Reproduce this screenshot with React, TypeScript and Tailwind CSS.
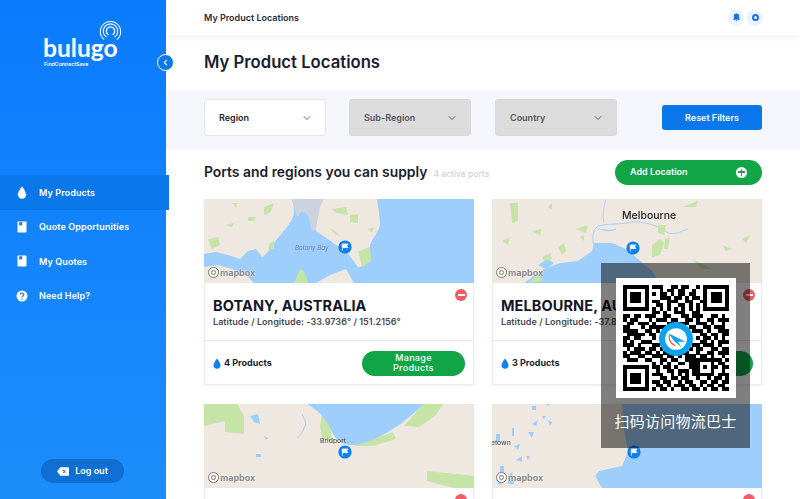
import React from "react";
import { ChevronDown, ChevronLeft } from "lucide-react";

const Drop = ({ className }: { className?: string }) => (
  <svg viewBox="0 0 12 16" className={className} fill="currentColor">
    <path d="M6 0.5C6 0.5 0.8 7 0.8 10.6a5.2 5.2 0 0 0 10.4 0C11.2 7 6 0.5 6 0.5Z" />
  </svg>
);

const Book = () => (
  <svg viewBox="0 0 10 12" className="w-[10px] h-[12px]">
    <rect x="0.5" y="0.5" width="9" height="11" rx="0.8" fill="#fff" />
    <rect x="2.2" y="1.2" width="3" height="3.2" fill="#1a7fe0" />
  </svg>
);

const Help = () => (
  <svg viewBox="0 0 12 12" className="w-[12px] h-[12px]">
    <circle cx="6" cy="6" r="5.5" fill="#fff" />
    <path d="M4.3 4.7a1.7 1.7 0 1 1 2.6 1.4c-.6.4-.9.6-.9 1.2" fill="none" stroke="#1a86f5" strokeWidth="1.2" />
    <circle cx="6" cy="9" r="0.7" fill="#1a86f5" />
  </svg>
);

const Marker = ({ x, y }: { x: number; y: number }) => (
  <g transform={`translate(${x} ${y})`}>
    <circle r="6.6" fill="#0d80f2" />
    <path d="M-2.6 -3.2V3.6M-2.6 -3H3L1.7 -1.2L3 0.6H-2.6Z" fill="#fff" stroke="#fff" strokeWidth="0.8" />
  </g>
);

const LAND = "#efe8e0";
const WATER = "#9ecefb";
const GREEN = "#c6e3a8";

const BotanyMap = () => (
  <svg viewBox="0 0 270 84" preserveAspectRatio="none" className="block w-full h-[84px] blur-[0.35px]">
    <rect width="270" height="84" fill={WATER} />
    <path d="M0 0H88C90 8 91 14 88 20C84 28 76 36 70 44C66 50 62 56 58 58L52 50L44 52L36 60L24 56L12 53L0 55Z" fill={LAND} />
    <path d="M0 68L14 66L28 70L42 76L50 84H0Z" fill={LAND} />
    <path d="M86 0H173C174 8 176 18 176 26C174 34 168 40 166 46L166 60C162 66 158 68 154 68L148 60L142 52L132 46L124 40L112 32L106 18L100 4Z" fill={LAND} />
    <path d="M88 0H120L116 8L112 30L108 32L104 16L98 12L93 18Z" fill="#cdd3dd" />
    <path d="M112 84L126 76L142 70L150 84Z" fill={LAND} />
    <path d="M90 84L96 70L100 72L104 84Z" fill={GREEN} />
    <path d="M154 52L166 48L167 62L158 68Z" fill={GREEN} />
    <path d="M146 16L154 15L154 24L146 23Z M128 10L142 8L144 16L132 14Z M60 8L70 4L66 14L60 16Z M44 18L52 18L50 22L44 22Z M4 40L14 38L16 46L8 50Z M66 44L70 42L70 50L64 50Z M28 4L34 4L32 8Z M22 26L30 24L28 28Z M124 28L136 36L132 36Z M164 30L170 28L168 34Z" fill={GREEN} />
    <text x="91" y="51" fontSize="6.2" fontStyle="italic" fill="#6f83a0" fontFamily="Inter, sans-serif">Botany Bay</text>
    <Marker x={141} y={48} />
  </svg>
);

const MelbourneMap = () => (
  <svg viewBox="0 0 270 84" preserveAspectRatio="none" className="block w-full h-[84px] blur-[0.35px]">
    <rect width="270" height="84" fill={LAND} />
    <path d="M32 84L52 70L68 64L86 62L100 52L102 44L120 44L134 50L146 60L160 72L168 84Z" fill={WATER} />
    <path d="M46 66L56 60L62 64L54 70Z" fill={WATER} />
    <path d="M102 46C100 38 100 32 106 27C116 24 130 26 140 23C150 22 166 26 176 34C184 36 190 32 196 30" fill="none" stroke={WATER} strokeWidth="0.9" />
    <path d="M112 24C110 16 112 8 114 0" fill="none" stroke={WATER} strokeWidth="0.8" />
    <path d="M106 30C112 30 116 34 124 30" fill="none" stroke={WATER} strokeWidth="1.2" />
    <path d="M160 46L168 40L172 44L168 56L160 58Z M173 40L178 38L176 50L172 50Z M166 26L174 26L172 36L166 34Z M18 4H26L26 22L20 24Z M66 48L72 44L74 52L70 56Z M50 58L58 54L60 60L52 62Z M10 42L18 38L16 46Z M84 30L96 26L94 34ZM88 38L92 36L92 42Z M190 8L206 2L204 8Z M200 60L220 70L210 70Z M36 84L46 76L52 82Z M40 32L50 30L48 36Z M56 8L60 4L60 10Z M230 46L240 50L234 52Z M250 40L258 36L254 44Z" fill={GREEN} />
    <text x="130" y="20" fontSize="10.5" fontWeight="500" fill="#222" fontFamily="Inter, sans-serif">Melbourne</text>
    <Marker x={141} y={49} />
  </svg>
);

const BridportMap = () => (
  <svg viewBox="0 0 270 84" preserveAspectRatio="none" className="block w-full h-[84px] blur-[0.35px]">
    <rect width="270" height="84" fill={LAND} />
    <path d="M0 22L21 17L21 28L40 30L40 12L33 0H0Z" fill={GREEN} />
    <path d="M223 67L270 72V84H250L223 77Z" fill={GREEN} />
    <path d="M200 22L219 0H239L231 12L215 23Z" fill={GREEN} />
    <path d="M118 8L126 18L128 38L118 34L116 22Z" fill={GREEN} />
    <path d="M149 42L189 28L192 35L169 42Z" fill={GREEN} />
    <path d="M103 0H219C212 8 198 20 184 28C172 35 160 40 150 41C140 42 132 36 128 28C125 20 118 8 103 0Z" fill={WATER} />
    <path d="M46 12L54 10L56 20L50 18Z M60 32L64 34L62 36Z M52 50H57V53H52Z" fill={WATER} />
    <path d="M98 10C100 16 104 18 100 24C98 30 96 30 94 34" fill="none" stroke={WATER} strokeWidth="1" />
    <text x="116" y="39" fontSize="6.8" fill="#444" fontFamily="Inter, sans-serif">Bridport</text>
    <Marker x={141} y={48} />
  </svg>
);

const FourthMap = () => (
  <svg viewBox="0 0 270 84" preserveAspectRatio="none" className="block w-full h-[84px] blur-[0.35px]">
    <rect width="270" height="84" fill={WATER} />
    <path d="M0 0H130L132 25L136 48L130 62L107 67L103 72L110 84H0Z" fill={LAND} />
    <path d="M40 2L44 2L44 6L40 6Z M54 0H58L56 2Z M40 20L46 16L44 22Z M50 12L54 12L52 16Z M56 16L60 18L58 22Z M36 28L42 28L40 34Z M20 24H22V32H20Z M4 30L8 30L8 38L4 38Z M22 42L28 40L26 46Z M24 56L30 52L30 58Z M34 52L38 52L36 56Z M8 62H12V68H8Z M16 72L20 68L22 80L16 80Z M4 76L10 76L8 82Z" fill={WATER} />
    <text x="-1" y="41" fontSize="6.8" fill="#444" fontFamily="Inter, sans-serif">etown</text>
    <Marker x={142} y={48} />
  </svg>
);

const Mapbox = () => (
  <div className="absolute left-[4px] top-[68px] flex items-center gap-[1px]">
    <span className="w-[11px] h-[11px] rounded-full bg-white border border-[#777] flex items-center justify-center">
      <span className="w-[5px] h-[5px] rounded-full border border-[#777]" />
    </span>
    <span className="text-[9px] font-bold leading-none text-[#8a8a8a] [text-shadow:0_0_1px_#fff,0_0_2px_#fff]">mapbox</span>
  </div>
);

function Card({ map, title, coords, count }: { map: React.ReactNode; title: string; coords: string; count: number }) {
  return (
    <div className="w-[270px] h-[186px] bg-white border border-[#e9ecf0] shadow-[0_1px_3px_rgba(0,0,0,0.06)] flex flex-col">
      <div className="relative h-[84px] shrink-0 -m-px mb-0 w-[270px] overflow-hidden">
        {map}
        <Mapbox />
      </div>
      <div className="relative h-[58px] shrink-0 pl-[8px] pt-[14px] border-b border-[#e6e8ec]">
        <div className="text-[14.5px] leading-[18px] font-bold text-[#14142b] tracking-[0.1px]">{title}</div>
        <div className="text-[9px] leading-[12px] mt-[1px] font-semibold text-[#4a4a55] tracking-[0.05px]">{coords}</div>
        <span className="absolute right-[6px] top-[6px] w-[12px] h-[12px] rounded-full bg-[#ef5c68] flex items-center justify-center">
          <span className="w-[7px] h-[2px] bg-white" />
        </span>
      </div>
      <div className="flex-1 flex items-center justify-between pl-[8px] pr-[8px] pt-[1px]">
        <div className="flex items-center gap-[3px]">
          <Drop className="w-[8px] h-[11px] text-[#1180ea]" />
          <span className="text-[9px] font-bold text-[#22222e]">{count} Products</span>
        </div>
        <div className="w-[103px] h-[25px] rounded-full bg-[#12a548] text-white text-[9px] leading-[10px] font-medium tracking-[0.3px] text-center flex items-center justify-center">
          Manage<br />Products
        </div>
      </div>
    </div>
  );
}

function Select({ label, active }: { label: string; active?: boolean }) {
  return (
    <div className={`w-[122px] h-[37px] rounded-[3px] flex items-center justify-between pl-[14px] pr-[12px] text-[9px] font-semibold ${active ? "bg-white border border-[#e4e6ee] text-[#26262f]" : "bg-[#dcdcdc] border border-[#d8d8da] text-[#55555e]"}`}>
      <span>{label}</span>
      <ChevronDown className={`w-[12px] h-[12px] ${active ? "text-[#0f6be0]" : "text-[#4c4c54]"}`} strokeWidth={1.8} />
    </div>
  );
}

const NavItem = ({ icon, label, active }: { icon: React.ReactNode; label: string; active?: boolean }) => (
  <div className={`h-[34.5px] flex items-center text-white text-[9px] font-semibold tracking-[0.1px] ${active ? "w-[169px] bg-[#0a78ea]" : "w-[166px]"}`}>
    <span className="w-[39px] pl-[16px] flex"><span className="w-[12px] flex justify-center">{icon}</span></span>
    {label}
  </div>
);

const QR_ROWS = [
  "11111110111001101100101111111",
  "10000010001011011001001000001",
  "10111010101101011011001011101",
  "10111010001110110101101011101",
  "10111010110011100110011011101",
  "10000010011010011010101000001",
  "11111110101010101010101111111",
  "00000000110100111001100000000",
  "11011011100110001101110011010",
  "10110001011101100110100110111",
  "01101110100011011100111010010",
  "11000101111100000011001101110",
  "11110011010000000001110100111",
  "01111101100000000000011011011",
  "11011000100000000000101101010",
  "10100111000000000000011010111",
  "11101000110000000001101110100",
  "01011101101000000010110011011",
  "10111011010110011100100110111",
  "11001100111011010111011010010",
  "01110011001101100111111101101",
  "00000000101010011011000110110",
  "11111110110110100011010111011",
  "10000010010011011101000110010",
  "10111010111001010101111110111",
  "10111010001101101100100101101",
  "10111010110110010110011011011",
  "10000010011010111011010110110",
  "11111110101101001101101011011",
];

const QrCode = () => (
  <svg viewBox="0 0 29 29" shapeRendering="crispEdges" className="w-[106px] h-[106px]">
    {QR_ROWS.map((row, y) =>
      row.split("").map((c, x) => (c === "1" ? <rect key={`${x}-${y}`} x={x} y={y} width="1.02" height="1.02" fill="#000" /> : null))
    )}
    <rect x="20" y="20" width="5" height="5" fill="#000" />
    <rect x="21" y="21" width="3" height="3" fill="#fff" />
    <rect x="22" y="22" width="1" height="1" fill="#000" />
  </svg>
);

export default function App() {
  return (
    <div className="relative w-[800px] h-[499px] overflow-hidden flex bg-white font-['Inter',sans-serif]">
      <aside className="relative z-10 w-[166px] h-full shrink-0 flex flex-col bg-gradient-to-b from-[#0a7bfd] to-[#1d8dfb]">
        <div className="relative h-[175px] shrink-0">
          <div className="pl-[43px] pt-[35px] text-white">
            <div className="text-[24.6px] leading-[26px] font-['Lato',sans-serif] font-bold">bulugo</div>
            <div className="w-[44px] pl-px text-[5.2px] leading-[6px] font-semibold whitespace-nowrap">FindConnectSave</div>
          </div>
          <svg viewBox="0 0 24 24" fill="none" stroke="#fff" className="absolute left-[99px] top-[20px] w-[23px] h-[23px]">
            <path d="M5.5 20.5a10.6 10.6 0 1 1 13 0" strokeWidth="1.1" />
            <path d="M7.8 18a7.6 7.6 0 1 1 8.4 0" strokeWidth="1.1" />
            <path d="M9.8 15.5a4.4 4.4 0 1 1 4.4 0" strokeWidth="1.3" />
          </svg>
          <span className="absolute left-[157px] top-[54px] w-[17px] h-[17px] rounded-full bg-[#0a78ea] border-[1.5px] border-white flex items-center justify-center">
            <ChevronLeft className="w-[9px] h-[9px] text-white" strokeWidth={3} />
          </span>
        </div>
        <NavItem active label="My Products" icon={<Drop className="w-[10px] h-[13px]" />} />
        <NavItem label="Quote Opportunities" icon={<Book />} />
        <NavItem label="My Quotes" icon={<Book />} />
        <NavItem label="Need Help?" icon={<Help />} />
        <div className="mt-auto mb-[16px] ml-[41px] w-[83px] h-[24px] rounded-full bg-[#0f6fd2] text-white text-[9px] font-semibold flex items-center justify-center gap-[6px]">
          <svg viewBox="0 0 14 10" className="w-[12px] h-[9px]">
            <path d="M4 0H13a1 1 0 0 1 1 1V9a1 1 0 0 1-1 1H4L0 5Z" fill="#fff" />
            <path d="M7 3L10 7M10 3L7 7" stroke="#0f6fd2" strokeWidth="1.1" />
          </svg>
          Log out
        </div>
      </aside>

      <main className="flex-1 min-w-0 flex flex-col">
        <header className="h-[35px] shrink-0 pl-[38px] pr-[37px] flex items-center justify-between bg-white shadow-[0_2px_6px_rgba(20,20,60,0.06)] relative">
          <span className="text-[9px] font-semibold text-[#2a2a38]">My Product Locations</span>
          <div className="flex gap-[3px]">
            <span className="w-[16px] h-[16px] rounded-full bg-[#eaf3fe] flex items-center justify-center">
              <svg viewBox="0 0 10 10" className="w-[9px] h-[9px]" fill="#1474e0">
                <path d="M5 0.5a3 3 0 0 1 3 3V6l1 1.5H1L2 6V3.5a3 3 0 0 1 3-3Z" />
                <path d="M4 8.3h2a1 1 0 0 1-2 0Z" />
              </svg>
            </span>
            <span className="w-[16px] h-[16px] rounded-full bg-[#eaf3fe] flex items-center justify-center">
              <span className="w-[7px] h-[7px] rounded-full border-2 border-[#1474e0]" />
            </span>
          </div>
        </header>
        <div className="h-[55px] shrink-0 px-[38px] pt-[1px] flex items-center text-[16.7px] font-semibold text-[#1c1c30]">My Product Locations</div>
        <div className="h-[60px] shrink-0 px-[38px] pb-[5px] bg-[#f5f6fb] flex items-center">
          <div className="flex gap-[23px]">
            <Select label="Region" active />
            <Select label="Sub-Region" />
            <div className="ml-px">
              <Select label="Country" />
            </div>
          </div>
          <div className="ml-auto w-[100px] h-[25px] rounded-[3px] bg-[#0a78ea] text-white text-[9px] font-semibold flex items-center justify-center">Reset Filters</div>
        </div>
        <div className="h-[49px] shrink-0 px-[38px] flex items-center justify-between pb-[5px]">
          <div className="flex items-baseline gap-[6px]">
            <span className="text-[13.9px] font-semibold text-[#1c1c30]">Ports and regions you can supply</span>
            <span className="text-[8.5px] font-medium text-[#d2d2d6]">4 active ports</span>
          </div>
          <div className="w-[147px] h-[25px] rounded-full bg-[#12a548] text-white text-[9px] font-semibold flex items-center justify-between pl-[15px] pr-[15px]">
            Add Location
            <span className="w-[11px] h-[11px] rounded-full bg-white relative flex items-center justify-center">
              <span className="w-[7px] h-[1.5px] bg-[#12a548]" />
              <span className="absolute w-[1.5px] h-[7px] bg-[#12a548]" />
            </span>
          </div>
        </div>
        <div className="px-[38px] grid grid-cols-[270px_270px] gap-x-[18px] gap-y-[19px]">
          <Card map={<BotanyMap />} title="BOTANY, AUSTRALIA" coords="Latitude / Longitude: -33.9736° / 151.2156°" count={4} />
          <Card map={<MelbourneMap />} title="MELBOURNE, AUSTRALIA" coords="Latitude / Longitude: -37.8136° / 144.9631°" count={3} />
          <Card map={<BridportMap />} title="BRIDPORT, AUSTRALIA" coords="Latitude / Longitude: -41.0014° / 147.3917°" count={2} />
          <Card map={<FourthMap />} title="GEELONG, AUSTRALIA" coords="Latitude / Longitude: -38.1499° / 144.3617°" count={2} />
        </div>
      </main>

      <div className="absolute z-20 left-[601px] top-[263px] w-[149px] h-[185px] bg-black/50 flex flex-col items-center pt-[15px]">
        <div className="relative w-[120px] h-[120px] bg-white flex items-center justify-center">
          <QrCode />
          <svg viewBox="0 0 36 36" className="absolute left-[43px] top-[44px] w-[34px] h-[34px]">
            <circle cx="18" cy="18" r="18" fill="#0ba3ef" />
            <circle cx="18" cy="18" r="11.5" fill="#fff" />
            <path d="M10 12L28 21L20 21L24 27L16 20Z" fill="#0ba3ef" />
            <path d="M11 14C10 18 12 23 17 25" fill="none" stroke="#f05a28" strokeWidth="1.2" />
          </svg>
        </div>
        <div className="mt-[13px] text-[15px] leading-[20px] tracking-[0.25px] font-normal text-white font-['Noto_Sans_CJK_SC',sans-serif]">扫码访问物流巴士</div>
      </div>
    </div>
  );
}
